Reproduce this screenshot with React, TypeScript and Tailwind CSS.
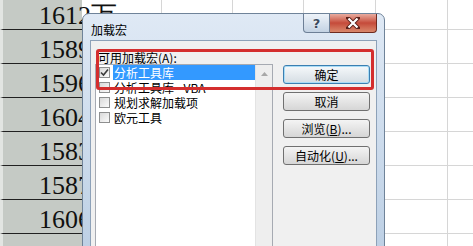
import React from "react";

const cjk = "font-['Noto_Sans_CJK_SC','Noto_Sans',sans-serif]";

const rows = ["1612万", "1589", "1596", "1604", "1583", "1587", "1606", ""];

function Checkbox({ checked }: { checked?: boolean }) {
    return (
        <span className="relative flex h-[11px] w-[11px] shrink-0 items-center justify-center border border-[#8e8f8f] bg-gradient-to-br from-[#d9d9d9] to-[#fbfbfb]">
            {checked && (
                <svg width="9" height="9" viewBox="0 0 9 9" className="absolute">
                    <path d="M1 4.5 L3.5 7 L8 1.5" fill="none" stroke="#3b3b3b" strokeWidth="1.6" />
                </svg>
            )}
        </span>
    );
}

function Button({ label, hot, primary }: { label: string; hot?: string; primary?: boolean }) {
    return (
        <div
            className={
                primary
                    ? "flex h-[19px] w-[87px] items-center justify-center rounded-[3px] border border-[#3c7fb1] bg-gradient-to-b from-[#f6f9fb] to-[#d5dde3] text-[12px] leading-[12px] text-black shadow-[inset_0_0_0_1px_#a9dcf6]"
                    : "flex h-[19px] w-[87px] items-center justify-center rounded-[3px] border border-[#707070] bg-gradient-to-b from-[#f4f4f4] to-[#d6d6d6] text-[12px] leading-[12px] text-black"
            }
        >
            {label}
            {hot && (
                <>
                    (<span className="underline">{hot}</span>)...
                </>
            )}
        </div>
    );
}

export default function App() {
    return (
        <div className={`relative h-[246px] w-[473px] overflow-hidden bg-white ${cjk}`}>

            {/* spreadsheet behind */}
            <div className="-mt-[4px] flex flex-col">
                {rows.map((n, i) => (
                    <div key={i} className="flex h-[34px]">
                        <div className="flex h-full w-[82px] shrink-0 items-end border-b border-l-[3px] border-b-[#202020] border-l-[#e2e5e2] bg-[#c5cac5] pl-[36px]">
                            <span className="whitespace-nowrap font-['Liberation_Serif',serif] text-[26px] leading-[26px] text-[#111]">
                                {n}
                            </span>
                        </div>
                        <div className="h-full w-[80px] shrink-0 border-r border-b border-[#d6d6d6]" />
                        <div className="h-full w-[71px] shrink-0 border-r border-b border-[#d6d6d6]" />
                        <div className="h-full w-[71px] shrink-0 border-r border-b border-[#d6d6d6]" />
                        <div className="h-full w-[72px] shrink-0 border-r border-b border-[#d6d6d6]" />
                        <div className="h-full w-[72px] shrink-0 border-r border-b border-[#d6d6d6]" />
                        <div className="h-full w-[72px] shrink-0 border-r border-b border-[#d6d6d6]" />
                    </div>
                ))}
            </div>

            {/* dialog window */}
            <div className="absolute left-[82px] top-[13px] flex h-[245px] w-[303px] flex-col rounded-t-[7px] border border-[#6f8399] bg-gradient-to-b from-[#dfe9f5] to-[#bccfe4] px-[7px]">
                {/* title bar */}
                <div className="relative h-[26px] shrink-0">
                    <span className="absolute left-[1px] top-[10px] text-[12px] leading-[12px] text-black">加载宏</span>

                    <div className="absolute right-0 top-0 flex">
                        <div className="flex h-[19px] w-[27px] items-center justify-center rounded-bl-[4px] border border-t-0 border-[#6d7f96] bg-gradient-to-b from-[#eef3f9] to-[#c3d2e3] font-['DejaVu_Sans',sans-serif] text-[13px] font-bold leading-[13px] text-[#3b4a5e] [text-shadow:0_0_2px_#fff]">
                            ?
                        </div>
                        <div className="flex h-[19px] w-[47px] items-center justify-center rounded-br-[4px] border border-l-0 border-t-0 border-[#6e2a1f] bg-gradient-to-b from-[#e8ab9f] via-[#c54a3a] to-[#d9876c]">
                            <svg width="14" height="12" viewBox="0 0 14 12">
                                <path d="M2 1 L12 11 M12 1 L2 11" stroke="#5a1f18" strokeWidth="4" strokeLinecap="square" />
                                <path d="M2.5 1.5 L11.5 10.5 M11.5 1.5 L2.5 10.5" stroke="#fff" strokeWidth="2.2" />
                            </svg>
                        </div>
                    </div>
                </div>

                {/* client area */}
                <div className="flex flex-1 border border-[#8da1b8] bg-[#f0f0f0]">
                    {/* left: list */}
                    <div className="flex w-[182px] shrink-0 flex-col pl-[4px] pt-[11px]">
                        <div className="ml-[3px] h-[12px] text-[12px] leading-[12px] text-black">
                            可用加载宏(<span className="underline">A</span>):
                        </div>
                        <div className="flex flex-1 border border-[#a6aab2] bg-white">
                            <div className="flex flex-1 flex-col">
                                {[
                                    { label: "分析工具库", checked: true, selected: true },
                                    { label: "分析工具库 - VBA" },
                                    { label: "规划求解加载项" },
                                    { label: "欧元工具" },
                                ].map((it) => (
                                    <div key={it.label} className="flex h-[15px] items-center pl-[3px]">
                                        <Checkbox checked={it.checked} />
                                        <span
                                            className={
                                                it.selected
                                                    ? "ml-[3px] flex h-[15px] flex-1 items-center bg-[#3399ff] pl-[1px] text-[12px] leading-[12px] text-white"
                                                    : "ml-[3px] flex h-[15px] flex-1 items-center pl-[1px] text-[12px] leading-[12px] text-black"
                                            }
                                        >
                                            {it.label}
                                        </span>
                                    </div>
                                ))}
                            </div>
                            {/* scrollbar */}
                            <div className="flex w-[17px] shrink-0 flex-col border-l border-[#e3e3e3] bg-[#eeeeee]">
                                <div className="flex h-[17px] items-center justify-center">
                                    <svg width="7" height="4" viewBox="0 0 7 4">
                                        <path d="M0 4 L3.5 0 L7 4 Z" fill="#a8a8a8" />
                                    </svg>
                                </div>
                            </div>
                        </div>
                    </div>

                    {/* right: buttons */}
                    <div className="ml-[10px] flex flex-col gap-[8px] pt-[24px]">
                        <Button label="确定" primary />
                        <Button label="取消" />
                        <Button label="浏览" hot="B" />
                        <Button label="自动化" hot="U" />
                    </div>
                </div>
            </div>

            {/* red annotation box */}
            <div className="absolute left-[96px] top-[49px] h-[41px] w-[278px] rounded-[3px] border-[3px] border-[#d42e2e]" />
        </div>
    );
}
